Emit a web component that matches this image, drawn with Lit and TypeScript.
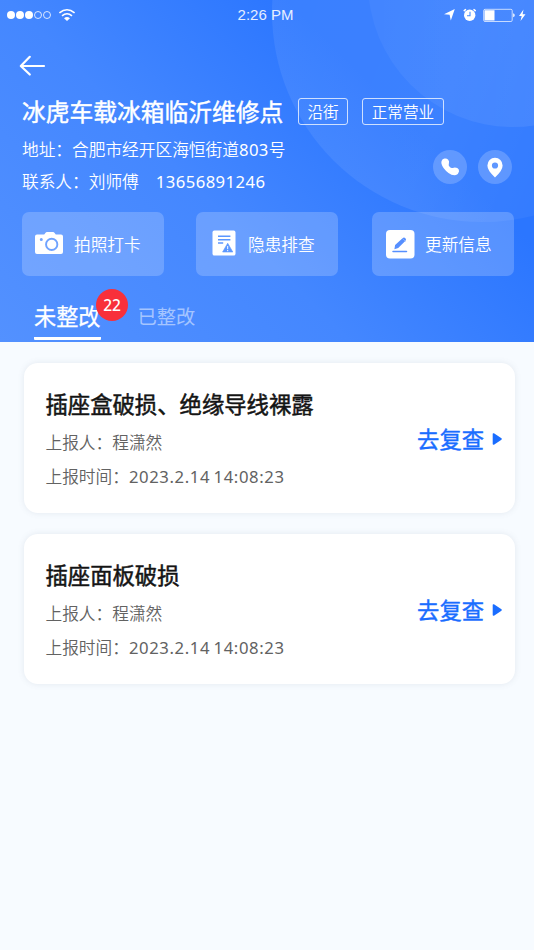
import { LitElement, html, css, svg } from "lit";
import { customElement, property } from "lit/decorators.js";

const cameraIcon = svg`<svg width="30" height="24" viewBox="0 0 30 24">
  <path fill="#fff" fill-rule="evenodd" d="M3 3.600h7.200l1.200-1.700Q12 1 13 1h6q1 0 1.600.9l1.200 1.700H27q2 0 2 2V21q0 2-2 2H3q-2 0-2-2V5.600q0-2 2-2ZM17.700 6.800a6.600 6.600 0 1 0 0 13.200a6.600 6.600 0 0 0 0-13.200ZM17.700 8.700a4.700 4.700 0 1 1 0 9.400a4.700 4.700 0 0 1 0-9.400ZM7.300 7.100a1.500 1.500 0 1 0 0 3a1.500 1.500 0 0 0 0-3Z"/></svg>`;
const reportIcon = svg`<svg width="24" height="26" viewBox="0 0 24 26">
  <rect x="0.500" y="0.600" width="23" height="25" rx="1.800" fill="#fff"/>
  <path d="M6 6.300h12.400M6 9.700h12.400M6 13.100h5.200" stroke="#5c97ff" stroke-width="1.500"/>
  <path d="M15.700 13.200 20.800 22H10.600Z" fill="#5c97ff" stroke="#5c97ff" stroke-width=".6" stroke-linejoin="round"/>
  <path d="M15.700 16v3.200M15.700 20v1.200" stroke="#fff" stroke-width="1"/></svg>`;
const editIcon = svg`<svg width="30" height="30" viewBox="0 0 30 30">
  <rect x="1" y="1" width="28.500" height="28.500" rx="4" fill="#fff"/>
  <path d="m9.400 20.200.7-4.300 7.700-6.900q1.300-1 2.600.2t.1 2.600l-7.300 7.300Z" fill="#568fff"/>
  <path d="M16.800 8.800 20.700 12.700" stroke="#9dc0ff" stroke-width=".6"/>
  <path d="M8 22.400h13.500" stroke="#568fff" stroke-width="1.500" stroke-linecap="round"/></svg>`;

@customElement("issue-card")
class IssueCard extends LitElement {
  @property() heading = "";
  @property() reporter = "";
  @property() time = "";

  static styles = css`
    :host { display: flex; box-sizing: border-box; height: 150px; width: 490.500px; padding: 26px 11.500px 0 21.500px;
      border-radius: 14px; background: #fff; box-shadow: 0 0 6px rgba(90, 110, 130, .13);
      justify-content: space-between; }
    .title { font-size: 22.35px; line-height: 32px; color: #141414; -webkit-text-stroke: .5px #141414; white-space: nowrap; }
    .meta { font-size: 16.7px; font-weight: 350; line-height: 24px; color: #626262; margin-top: 10px; white-space: nowrap; }
    .meta:last-child { margin-top: 10px; }
    .date { font-weight: 400; letter-spacing: .6px; word-spacing: -1.500px; }
    .action { display: flex; align-items: center; height: 32px; margin-top: 35px; gap: 8px; color: #1a6dff;
      font-size: 22.3px; line-height: 32px; -webkit-text-stroke: .4px #1a6dff; }
    .action svg { margin-top: -2px; }
  `;

  render() {
    return html`
      <div class="info">
        <div class="title">${this.heading}</div>
        <div class="meta">上报人：${this.reporter}</div>
        <div class="meta">上报时间：<span class="date">${this.time}</span></div>
      </div>
      <div class="action"><span>去复查</span>
        <svg width="11" height="14" viewBox="0 0 11 14"><path d="M1.500 2v10L9 7Z" fill="#1a6dff" stroke="#1a6dff" stroke-width="1.600" stroke-linejoin="round"/></svg>
      </div>`;
  }
}

@customElement("app-root")
class AppRoot extends LitElement {
  static styles = css`
    :host { display: block; min-height: 950px; background: #f7fbff; font-family: "Noto Sans", "Noto Sans CJK SC", sans-serif; color: #fff; }
    .head { position: relative; height: 342px; overflow: hidden;
      background: linear-gradient(45deg, #5391ff 0%, #4487ff 40%, #2b76ff 72%, #2b76ff 100%); }
    .rings { position: absolute; left: 0; top: 0; }
    .content { position: relative; display: flex; flex-direction: column; height: 342px; }
    .status { display: flex; align-items: center; height: 29px; padding: 0 7px; box-sizing: border-box; }
    .side { flex: 1; display: flex; align-items: center; }
    .side.right { justify-content: flex-end; }
    .clock { font: 15px/29px "Liberation Sans", Arial, sans-serif; opacity: .88; margin-right: 3px; }
    .nav { height: 22px; margin: 26px 0 0 19px; }
    .nav svg, .side svg { display: block; }
    .name-row { display: flex; align-items: center; height: 34px; margin: 17px 0 0 22px; }
    .name { width: 276px; font-size: 23.75px; line-height: 34px; -webkit-text-stroke: .45px #fff; white-space: nowrap; padding-top: 1px; }
    .chip { box-sizing: border-box; height: 27px; border: 1px solid rgba(255,255,255,.75); border-radius: 3px; padding: 1px 8.500px 0;
      font-size: 15.6px; font-weight: 350; line-height: 25px; margin-right: 14px; white-space: nowrap; }
    .contact { display: flex; justify-content: space-between; padding: 0 22px; height: 84px; }
    .lines { display: flex; flex-direction: column; padding-top: 6px; font-size: 16.7px; font-weight: 350; line-height: 32px; white-space: nowrap; }
    .num { font-weight: 400; letter-spacing: .4px; }
    .tel { font-weight: 400; margin-left: 17px; letter-spacing: .42px; }
    .rounds { display: flex; gap: 11px; padding-top: 22px; }
    .round { width: 34px; height: 34px; border-radius: 50%; background: rgba(255,255,255,.2); }
    .round svg { display: block; }
    .actions { display: flex; gap: 32px; padding: 0 20px 0 22px; }
    .tile { display: flex; align-items: center; box-sizing: border-box; width: 142px; height: 64px; padding-left: 12px; gap: 10px;
      border-radius: 7px; background: rgba(255,255,255,.2); font-size: 16.7px; font-weight: 350; white-space: nowrap; }
    .tile svg { margin-top: -2px; }
    .tile:nth-child(2) { padding-left: 16px; gap: 12px; }
    .tile:nth-child(3) { padding-left: 13px; margin-left: 2px; }
    .tile:nth-child(3) svg { margin-top: -1px; }
    .tabs { display: flex; height: 66px; padding-left: 34px; gap: 37px; align-items: flex-start; }
    .tab { position: relative; box-sizing: border-box; height: 64px; padding-top: 25px; font-size: 22.2px; line-height: 32px; white-space: nowrap; -webkit-text-stroke: .25px #fff; }
    .tab.on { border-bottom: 3px solid #fff; border-radius: 1px; }
    .tab.off { font-size: 19.3px; color: rgba(255,255,255,.5); -webkit-text-stroke: 0; }
    .badge { position: absolute; left: 62px; top: 13px; width: 32px; height: 32px; border-radius: 50%; background: #f8303a;
      text-align: center; font-size: 15.5px; line-height: 32px; font-weight: 500; -webkit-text-stroke: 0; }
    .list { display: flex; flex-direction: column; gap: 21px; padding: 21px 0 0 24px; }
  `;

  render() {
    return html`
      <div class="head">
        <svg class="rings" width="534" height="342" viewBox="0 0 534 342">
          <defs>
            <linearGradient id="a" x1="0" y1="0.300" x2="1" y2="0.700"><stop offset="0" stop-color="#fff" stop-opacity=".07"/><stop offset=".5" stop-color="#fff" stop-opacity=".08"/><stop offset="1" stop-color="#fff" stop-opacity=".01"/></linearGradient>
            <linearGradient id="b" x1="0" y1="0.500" x2="1" y2="0.500"><stop offset="0" stop-color="#fff" stop-opacity=".04"/><stop offset="1" stop-color="#fff" stop-opacity=".1"/></linearGradient>
          </defs>
          <circle cx="482" cy="12" r="210" fill="url(#a)"/>
          <circle cx="513" cy="-18" r="145" fill="url(#b)"/>
        </svg>
        <div class="content">
          <div class="status">
            <div class="side">
              <svg width="70" height="16" viewBox="0 0 70 16" fill="none" stroke="#fff">
                <g fill="#fff" stroke="none"><circle cx="4" cy="8" r="4"/><circle cx="13" cy="8" r="4"/><circle cx="22" cy="8" r="4"/></g>
                <circle cx="31" cy="8" r="3.500" stroke-width=".8"/><circle cx="40" cy="8" r="3.500" stroke-width=".8"/>
                <path d="M52.400 5.900q7.600-6.300 15.200 0M55 8.800q5-4.100 10 0" stroke-width="1.600"/>
                <path d="M57 11.200q3-2.300 6 0l-3 2.800Z" fill="#fff" stroke="none"/>
              </svg>
            </div>
            <span class="clock">2:26 PM</span>
            <div class="side right">
              <svg width="84" height="16" viewBox="0 0 84 16">
                <path d="M11.800 2 7.800 13.500 6.600 7.700 1 7.200Z" fill="#fff"/>
                <circle cx="26.700" cy="8.300" r="5.700" fill="#fff"/>
                <path d="M21.200 3.600 22.500 2.600M31 2.600 32.300 3.600" stroke="#fff" stroke-width="1.500" stroke-linecap="round"/>
                <path d="M27 4.800V8.700H24" fill="none" stroke="#438aff" stroke-width="1.100"/>
                <rect x="40.700" y="2.300" width="28.500" height="12.200" rx="1.300" fill="none" stroke="#fff" stroke-width=".7"/>
                <path d="M41.500 3.200h10v10.400h-10ZM70.200 6.200q1.500.5 1.500 2t-1.500 2Z" fill="#fff"/>
                <path d="M80.500 2.500 76 9h2.700l-1.200 5 5-6.700h-2.900Z" fill="#fff"/>
              </svg>
            </div>
          </div>
          <div class="nav">
            <svg width="28" height="22" viewBox="0 0 28 22" fill="none" stroke="#fff" stroke-width="2.200" stroke-linecap="round" stroke-linejoin="round"><path d="M10.800 1.800 1.800 11 10.800 19.500M2 11h23"/></svg>
          </div>
          <div class="name-row"><span class="name">冰虎车载冰箱临沂维修点</span><span class="chip">沿街</span><span class="chip">正常营业</span></div>
          <div class="contact">
            <div class="lines">
              <div>地址：合肥市经开区海恒街道<span class="num">803</span>号</div>
              <div>联系人：刘师傅<span class="tel">13656891246</span></div>
            </div>
            <div class="rounds">
              <div class="round"><svg width="34" height="34" viewBox="0 0 34 34"><path fill="#fff" d="M8.600 10.900Q9.300 8.900 11.500 8.500t3.700 1.200q1.400 1.600.7 3.800-.8 1.700.7 3.300t3.200 1.100q2.300-1 4.500.2 2.100 1.200 1.700 3.500-.5 2.500-3 3.400-3.800.7-7.500-2.100-5.800-4.300-7-9.200-.3-1.500.1-2.800Z"/></svg></div>
              <div class="round"><svg width="34" height="34" viewBox="0 0 34 34"><path fill="#fff" fill-rule="evenodd" d="M17 7.800a7.600 7.600 0 0 1 7.600 7.700q0 3-2 5.800-1.700 2.500-5.600 6.100-3.900-3.600-5.600-6.100-2-2.800-2-5.800A7.600 7.600 0 0 1 17 7.800Zm0 4.600a3.100 3.100 0 1 0 0 6.200a3.100 3.100 0 0 0 0-6.200Z"/></svg></div>
            </div>
          </div>
          <div class="actions">
            <div class="tile">${cameraIcon}<span>拍照打卡</span></div>
            <div class="tile">${reportIcon}<span>隐患排查</span></div>
            <div class="tile">${editIcon}<span>更新信息</span></div>
          </div>
          <div class="tabs">
            <div class="tab on">未整改<span class="badge">22</span></div>
            <div class="tab off">已整改</div>
          </div>
        </div>
      </div>
      <div class="list">
        <issue-card heading="插座盒破损、绝缘导线裸露" reporter="程潇然" time="2023.2.14 14:08:23"></issue-card>
        <issue-card heading="插座面板破损" reporter="程潇然" time="2023.2.14 14:08:23"></issue-card>
      </div>`;
  }
}
